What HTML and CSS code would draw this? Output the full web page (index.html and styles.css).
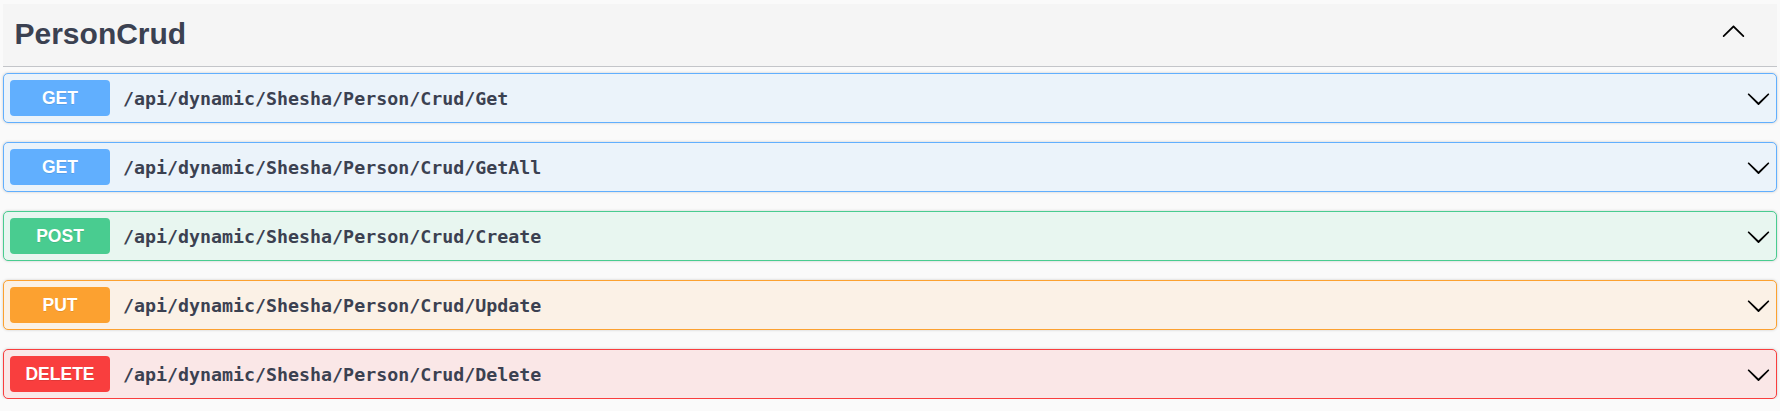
FILE: index.html
```html
<!DOCTYPE html>
<html lang="en">
<head>
<meta charset="utf-8">
<title>PersonCrud</title>
<link rel="stylesheet" href="styles.css">
</head>
<body>
<section class="tag-section">
  <h3 class="tag">
    <span class="tag-name">PersonCrud</span>
    <button class="expand" aria-label="Collapse">
      <svg width="25" height="25" viewBox="0 0 20 20"><path d="M17.418 14.908c.272.268.709.268.979 0s.271-.701 0-.969l-7.908-7.83c-.27-.268-.707-.268-.979 0l-7.908 7.83c-.27.268-.27.701 0 .969.271.268.709.268.979 0L10 7.75l7.418 7.158z"/></svg>
    </button>
  </h3>
  <div class="ops">
    <div class="op op-get">
      <span class="method">GET</span>
      <span class="path">/api/dynamic/Shesha/Person/Crud/Get</span>
      <svg class="arrow" width="25" height="25" viewBox="0 0 20 20"><path d="M17.418 6.109c.272-.268.709-.268.979 0s.271.701 0 .969l-7.908 7.83c-.27.268-.707.268-.979 0l-7.908-7.83c-.27-.268-.27-.701 0-.969.271-.268.709-.268.979 0L10 13.25l7.418-7.141z"/></svg>
    </div>
    <div class="op op-get">
      <span class="method">GET</span>
      <span class="path">/api/dynamic/Shesha/Person/Crud/GetAll</span>
      <svg class="arrow" width="25" height="25" viewBox="0 0 20 20"><path d="M17.418 6.109c.272-.268.709-.268.979 0s.271.701 0 .969l-7.908 7.83c-.27.268-.707.268-.979 0l-7.908-7.83c-.27-.268-.27-.701 0-.969.271-.268.709-.268.979 0L10 13.25l7.418-7.141z"/></svg>
    </div>
    <div class="op op-post">
      <span class="method">POST</span>
      <span class="path">/api/dynamic/Shesha/Person/Crud/Create</span>
      <svg class="arrow" width="25" height="25" viewBox="0 0 20 20"><path d="M17.418 6.109c.272-.268.709-.268.979 0s.271.701 0 .969l-7.908 7.83c-.27.268-.707.268-.979 0l-7.908-7.83c-.27-.268-.27-.701 0-.969.271-.268.709-.268.979 0L10 13.25l7.418-7.141z"/></svg>
    </div>
    <div class="op op-put">
      <span class="method">PUT</span>
      <span class="path">/api/dynamic/Shesha/Person/Crud/Update</span>
      <svg class="arrow" width="25" height="25" viewBox="0 0 20 20"><path d="M17.418 6.109c.272-.268.709-.268.979 0s.271.701 0 .969l-7.908 7.83c-.27.268-.707.268-.979 0l-7.908-7.83c-.27-.268-.27-.701 0-.969.271-.268.709-.268.979 0L10 13.25l7.418-7.141z"/></svg>
    </div>
    <div class="op op-delete">
      <span class="method">DELETE</span>
      <span class="path">/api/dynamic/Shesha/Person/Crud/Delete</span>
      <svg class="arrow" width="25" height="25" viewBox="0 0 20 20"><path d="M17.418 6.109c.272-.268.709-.268.979 0s.271.701 0 .969l-7.908 7.83c-.27.268-.707.268-.979 0l-7.908-7.83c-.27-.268-.27-.701 0-.969.271-.268.709-.268.979 0L10 13.25l7.418-7.141z"/></svg>
    </div>
  </div>
</section>
</body>
</html>
```

FILE: styles.css
```css
html, body {
  margin: 0;
  padding: 0;
  background: #fafafa;
}
body {
  padding: 4px 3px 0 3px;
  font-family: "Liberation Sans", Arial, sans-serif;
}
.tag-section {
  display: block;
}
.tag {
  margin: 0;
  display: flex;
  align-items: flex-start;
  background: #f5f5f5;
  border-bottom: 1px solid #c3c5c9;
  padding: 13px 0 15px 11.5px;
  height: 34px;
}
.tag-name {
  flex: 1;
  font-size: 30px;
  line-height: 34px;
  font-weight: 700;
  color: #3b4151;
}
.expand {
  border: 0;
  background: none;
  padding: 0;
  margin: 1.3px 31.5px 0 0;
  width: 25px;
  height: 25px;
  display: block;
}
.expand svg {
  display: block;
  fill: #000;
}
.ops {
  display: flex;
  flex-direction: column;
  gap: 19px;
  padding-top: 6px;
}
.op {
  display: flex;
  align-items: center;
  height: 48px;
  padding: 0 5px 0 6px;
  border: 1px solid;
  border-radius: 5px;
  box-shadow: 0 0 3px rgba(0, 0, 0, .19);
}
.method {
  width: 100px;
  height: 36px;
  line-height: 36px;
  border-radius: 4px;
  text-align: center;
  color: #fff;
  font-size: 17.5px;
  font-weight: 700;
  text-shadow: 0 1px 0 rgba(0, 0, 0, .1);
  flex: none;
}
.path {
  flex: 1;
  padding-left: 13px;
  font-family: "DejaVu Sans Mono", "Liberation Mono", monospace;
  font-size: 18.3px;
  font-weight: 600;
  color: #3b4151;
}
.arrow {
  flex: none;
  display: block;
  fill: #000;
}
.op-get { background: #ebf3fa; border-color: #61affe; }
.op-get .method { background: #61affe; }
.op-post { background: #e8f6f0; border-color: #49cc90; }
.op-post .method { background: #49cc90; }
.op-put { background: #fbf1e6; border-color: #fca130; }
.op-put .method { background: #fca130; }
.op-delete { background: #fae7e7; border-color: #f93e3e; }
.op-delete .method { background: #f93e3e; }
```
